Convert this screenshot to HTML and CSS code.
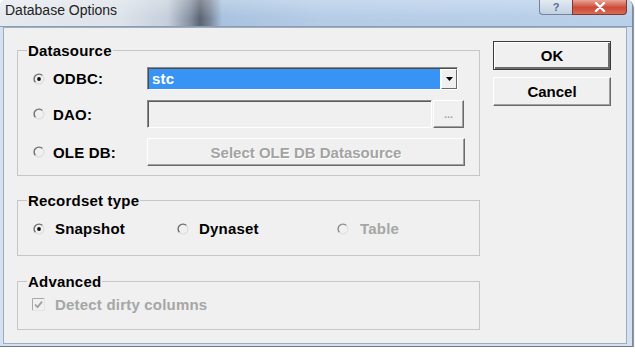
FILE: index.html
```html
<!DOCTYPE html>
<html lang="en">
<head>
  <meta charset="UTF-8">
  <title>Database Options</title>
  <link rel="stylesheet" href="styles.css">
</head>
<body>
  <div class="window">

    <!-- Title bar with the help / close caption buttons -->
    <div class="titlebar">
      <span class="title">Database Options</span>
      <div class="caption-buttons">
        <span class="cap-btn help">?</span>
        <span class="cap-btn close">
          <svg viewBox="0 0 12 10" width="12" height="10">
            <path d="M2 1l8 8M10 1l-8 8" stroke="#fff" stroke-width="2.4" stroke-linecap="round"/>
          </svg>
        </span>
      </div>
    </div>

    <div class="client">
      <div class="main">

        <!-- Datasource group -->
        <fieldset class="group datasource">
          <legend>Datasource</legend>

          <div class="src-row">
            <span class="opt">
              <svg class="radio" viewBox="0 0 12 12">
                <path d="M2.5 9.5A4.95 4.95 0 0 1 9.5 2.5" fill="none" stroke="#6e6e6e" stroke-width="1.4"/>
                <path d="M9.5 2.5A4.95 4.95 0 0 1 2.5 9.5" fill="none" stroke="#dedede" stroke-width="1.2"/>
                <circle cx="6" cy="6" r="1.9" fill="#111"/>
              </svg>
              ODBC:
            </span>
            <div class="combo">
              <span class="combo-value">stc</span>
              <span class="combo-arrow">
                <svg viewBox="0 0 7 4" width="7" height="4"><path d="M0 0h7L3.5 4z" fill="#000"/></svg>
              </span>
            </div>
          </div>

          <div class="src-row">
            <span class="opt">
              <svg class="radio" viewBox="0 0 12 12">
                <path d="M2.5 9.5A4.95 4.95 0 0 1 9.5 2.5" fill="none" stroke="#6e6e6e" stroke-width="1.4"/>
                <path d="M9.5 2.5A4.95 4.95 0 0 1 2.5 9.5" fill="none" stroke="#dedede" stroke-width="1.2"/>
              </svg>
              DAO:
            </span>
            <div class="edit"></div>
            <button class="btn browse">...</button>
          </div>

          <div class="src-row">
            <span class="opt">
              <svg class="radio" viewBox="0 0 12 12">
                <path d="M2.5 9.5A4.95 4.95 0 0 1 9.5 2.5" fill="none" stroke="#6e6e6e" stroke-width="1.4"/>
                <path d="M9.5 2.5A4.95 4.95 0 0 1 2.5 9.5" fill="none" stroke="#dedede" stroke-width="1.2"/>
              </svg>
              OLE DB:
            </span>
            <button class="btn select-ole">Select OLE DB Datasource</button>
          </div>
        </fieldset>

        <!-- Recordset type group -->
        <fieldset class="group recordset">
          <legend>Recordset type</legend>
          <div class="rs-row">
            <span class="rs-opt">
              <svg class="radio" viewBox="0 0 12 12">
                <path d="M2.5 9.5A4.95 4.95 0 0 1 9.5 2.5" fill="none" stroke="#6e6e6e" stroke-width="1.4"/>
                <path d="M9.5 2.5A4.95 4.95 0 0 1 2.5 9.5" fill="none" stroke="#dedede" stroke-width="1.2"/>
                <circle cx="6" cy="6" r="1.9" fill="#111"/>
              </svg>
              Snapshot
            </span>
            <span class="rs-opt">
              <svg class="radio" viewBox="0 0 12 12">
                <path d="M2.5 9.5A4.95 4.95 0 0 1 9.5 2.5" fill="none" stroke="#6e6e6e" stroke-width="1.4"/>
                <path d="M9.5 2.5A4.95 4.95 0 0 1 2.5 9.5" fill="none" stroke="#dedede" stroke-width="1.2"/>
              </svg>
              Dynaset
            </span>
            <span class="rs-opt disabled">
              <svg class="radio" viewBox="0 0 12 12">
                <path d="M2.5 9.5A4.95 4.95 0 0 1 9.5 2.5" fill="none" stroke="#8a8a8a" stroke-width="1.4"/>
                <path d="M9.5 2.5A4.95 4.95 0 0 1 2.5 9.5" fill="none" stroke="#e2e2e2" stroke-width="1.2"/>
              </svg>
              Table
            </span>
          </div>
        </fieldset>

        <!-- Advanced group -->
        <fieldset class="group advanced">
          <legend>Advanced</legend>
          <div class="check-row disabled">
            <svg class="check" viewBox="0 0 13 13">
              <path d="M0.5 12.5V0.5h12" fill="none" stroke="#a8a8a8"/>
              <path d="M12.5 0.5v12h-12" fill="none" stroke="#e4e4e4"/>
              <path d="M3 6.5l2.5 2.6L10 3.6" fill="none" stroke="#a0a0a0" stroke-width="1.8"/>
            </svg>
            Detect dirty columns
          </div>
        </fieldset>

      </div>

      <div class="side">
        <button class="btn action default">OK</button>
        <button class="btn action">Cancel</button>
      </div>
    </div>

  </div>
</body>
</html>
```

FILE: styles.css
```css
body {
  margin: 0;
  background: #fff;
  font-family: "Liberation Sans", Arial, sans-serif;
}

/* Outer window frame (Aero style) */
.window {
  width: 632px;
  height: 346px;
  display: flex;
  flex-direction: column;
  background: #d3e1f0;
  border-radius: 6px 6px 0 0;
  border-right: 1px solid #7d8da1;
  border-bottom: 1px solid #6f7884;
  box-shadow: 1px 2px 1px rgba(40, 44, 52, 0.55);
}

.titlebar {
  flex: none;
  height: 26px;
  display: flex;
  align-items: flex-start;
  border-bottom: 1px solid #8c9db1;
  border-radius: 6px 6px 0 0;
  background:
    linear-gradient(180deg, rgba(255, 255, 255, 0.25), rgba(255, 255, 255, 0) 70%),
    linear-gradient(90deg, #e6eaef 0, #dde3ea 120px, #c5cfdb 168px, #8591a2 190px, #5b6471 200px, #7b879a 210px, #a9c2df 222px, #b5cce7 320px, #b9d0ea 635px);
}

.title {
  font-size: 14px;
  line-height: 17px;
  color: #222;
  padding: 2px 0 0 5px;
}

.caption-buttons {
  margin-left: auto;
  margin-right: 5px;
  display: flex;
}

.cap-btn {
  height: 15px;
  display: flex;
  align-items: center;
  justify-content: center;
  box-sizing: border-box;
}

.cap-btn.help {
  width: 33px;
  border: 1px solid #71839a;
  border-top: none;
  border-right: none;
  border-radius: 0 0 0 4px;
  background: linear-gradient(180deg, #e3eaf3, #c2d0e1);
  color: #56708f;
  font-size: 11px;
  font-weight: bold;
}

.cap-btn.close {
  width: 55px;
  border: 1px solid #7b3b33;
  border-top: none;
  border-radius: 0 0 4px 0;
  background: linear-gradient(180deg, #e9a497, #cc4a36 55%, #d96d57);
}

/* Dialog client area */
.client {
  flex: 1;
  margin: 0 5px 2px 3px;
  border: 1px solid #9eadbf;
  background: #f0f0f0;
  display: flex;
  gap: 13px;
  padding: 13px 0 0 13px;
  font-size: 15px;
  font-weight: bold;
  letter-spacing: 0.2px;
}

.main {
  width: 463px;
  padding-top: 1px;
}

.group {
  margin: 0;
  padding: 0 10px 9px 9px;
  border: 1px solid #c6c6c6;
}

.group legend {
  padding: 0 1px;
  line-height: 17px;
}

.datasource {
  padding-top: 8px;
}

.recordset {
  margin-top: 16px;
  padding-top: 11px;
  padding-bottom: 18px;
}

.advanced {
  margin-top: 17px;
  padding-top: 6px;
  padding-bottom: 16px;
}

.radio {
  width: 12px;
  height: 12px;
  flex: none;
}

/* Datasource rows */
.src-row {
  display: flex;
  align-items: center;
  margin-left: 6px;
}

.src-row + .src-row {
  margin-top: 10px;
}

.opt {
  width: 114px;
  flex: none;
  display: flex;
  align-items: center;
  gap: 8px;
}

.combo {
  width: 311px;
  height: 23px;
  box-sizing: border-box;
  display: flex;
  border: 1px solid;
  border-color: #8a8a8a #fff #fff #8a8a8a;
  box-shadow: inset 1px 1px #4d4d4d;
  background: #fff;
  padding: 1px 0 0 1px;
}

.combo-value {
  flex: 1;
  background: #3794f4;
  color: #fff;
  line-height: 20px;
  padding-left: 3px;
  margin: 0 1px 0 0;
}

.combo-arrow {
  width: 16px;
  box-sizing: border-box;
  display: flex;
  align-items: center;
  justify-content: center;
  background: #f0f0f0;
  border: 1px solid;
  border-color: #fff #6b6b6b #6b6b6b #fff;
}

.edit {
  width: 285px;
  height: 28px;
  box-sizing: border-box;
  border: 1px solid;
  border-color: #8a8a8a #fff #fff #8a8a8a;
  box-shadow: inset 1px 1px #5a5a5a;
  background: #f0f0f0;
}

/* Classic raised buttons */
.btn {
  box-sizing: border-box;
  background: #f0f0f0;
  border: 1px solid;
  border-color: #fff #6b6b6b #6b6b6b #fff;
  box-shadow: inset -1px -1px #a0a0a0;
  font: inherit;
  color: #000;
  padding: 0;
  margin: 0;
}

.browse {
  width: 31px;
  height: 28px;
  margin-left: 1px;
  color: #a6a6a6;
  font-size: 11px;
  letter-spacing: 0;
}

.select-ole {
  width: 318px;
  height: 28px;
  color: #a3a3a3;
  text-shadow: 1px 1px #fff;
}

.side {
  width: 118px;
  display: flex;
  flex-direction: column;
  gap: 7px;
}

.action {
  height: 29px;
}

.action.default {
  border: 1px solid #3a3a3a;
  box-shadow: inset 1px 1px #fff, inset -2px -2px #6b6b6b;
}

/* Recordset type radios */
.rs-row {
  display: grid;
  grid-template-columns: 144px 160px auto;
  margin-left: 6px;
  line-height: 17px;
}

.rs-opt {
  display: flex;
  align-items: center;
  gap: 10px;
}

.disabled {
  color: #a6a6a6;
}

.rs-opt.disabled {
  gap: 11px;
}

/* Advanced checkbox */
.check-row {
  display: flex;
  align-items: center;
  gap: 10px;
  margin-left: 5px;
  line-height: 17px;
}

.check {
  width: 13px;
  height: 13px;
  flex: none;
}
```
